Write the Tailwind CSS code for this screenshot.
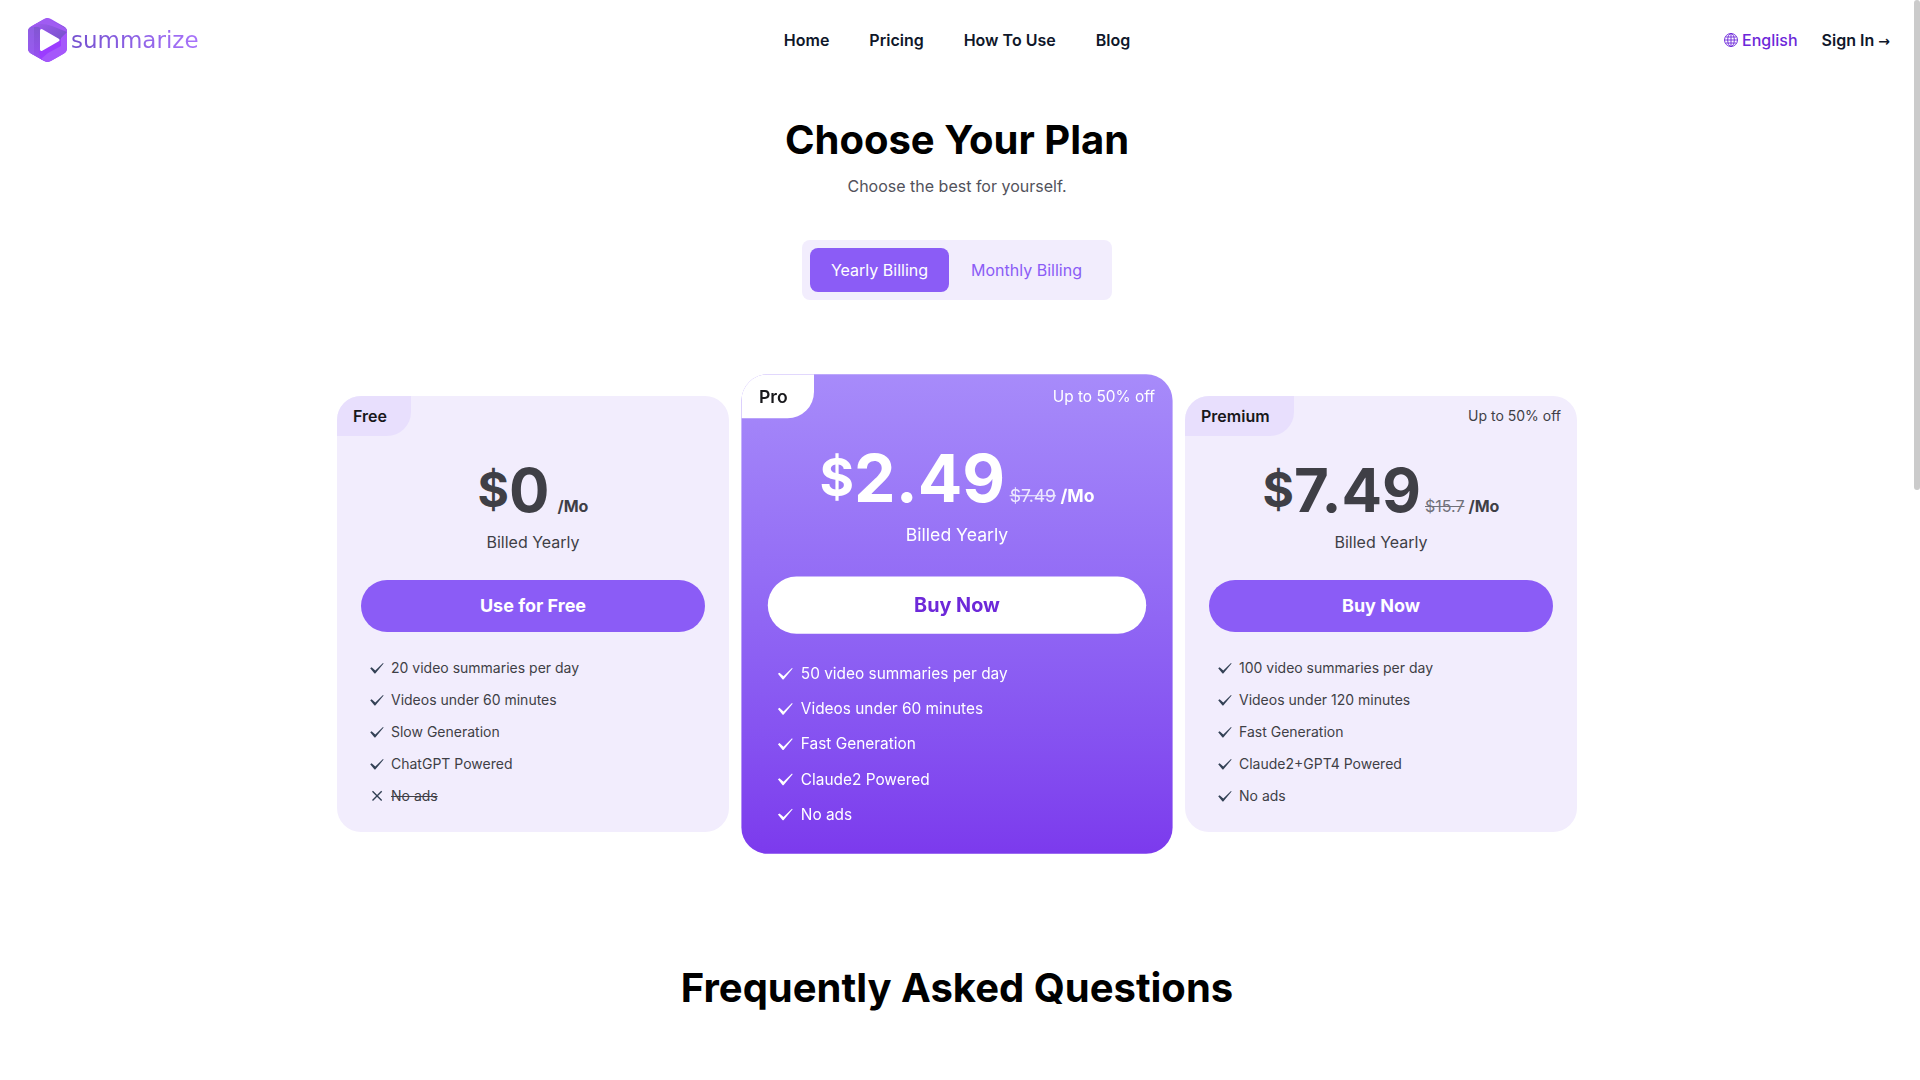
<!DOCTYPE html>
<html lang="en">
<head>
<meta charset="utf-8">
<meta name="viewport" content="width=device-width, initial-scale=1">
<title>Summarize – Pricing</title>
<script src="https://cdn.jsdelivr.net/npm/@tailwindcss/browser@4"></script>
</head>
<body class="min-h-screen overflow-x-hidden bg-white pr-[6px] font-['Inter',sans-serif] text-base text-[#3f3f46]">

<!-- Shared icons -->
<svg class="hidden" aria-hidden="true">
  <symbol id="check" viewBox="0 0 16 16">
    <path fill="currentColor" d="M1.200 8.300 2.600 7.300 6.300 10.600 14 3 14.600 3.600 6.300 13.600 5.500 13.600Z"/>
  </symbol>
  <symbol id="cross" viewBox="0 0 16 16">
    <path fill="none" stroke="currentColor" stroke-width="1.4" d="M3.5 3.3 12.7 12.5M12.7 3.3 3.5 12.5"/>
  </symbol>
</svg>

<header class="grid h-20 grid-cols-[1fr_auto_1fr] items-center px-6">
  <a href="#" class="flex items-center gap-[3px] pl-1" aria-label="summarize">
    <svg class="h-11 w-10" viewBox="0 0 40 44" aria-hidden="true">
      <defs>
        <linearGradient id="lg1" x1="0" y1="0" x2="0" y2="1"><stop offset="0" stop-color="#8057cf"/><stop offset="1" stop-color="#9a4ff5"/></linearGradient>
        <linearGradient id="lg2" x1="0" y1="0" x2="1" y2="1"><stop offset="0" stop-color="#a95cf8"/><stop offset="1" stop-color="#7452c8"/></linearGradient>
        <linearGradient id="lg3" x1="0" y1="1" x2="1" y2="0"><stop offset="0" stop-color="#8f43f4"/><stop offset="1" stop-color="#a65cff"/></linearGradient>
        <clipPath id="hex"><path d="M16 1.100Q19.500-1 23 1.100L36 8.500Q39 10.300 39 14V30Q39 33.700 36 35.500L23 43Q19.500 45 16 43L3 35.500Q0 33.700 0 30V14Q0 10.300 3 8.500Z"/></clipPath>
      </defs>
      <g clip-path="url(#hex)">
        <rect width="40" height="44" fill="url(#lg3)"/>
        <path fill="url(#lg1)" d="M0 10 12 8V33L19 44 0 36Z"/>
        <path fill="#9a63ee" opacity=".6" d="M0 10 6 9V38L0 35Z"/>
        <path fill="url(#lg2)" d="M0 10 19 0 39 10V16L32 22 13 10Q7 7 0 10Z"/>
        <path fill="#a05cf2" d="M3 8 19 0 39 11V14L24 8Q12 4 3 8Z"/>
        <path fill="#9b3cff" d="M39 14V26L20 36 13 44 11 33 32 22Q38 19 39 14Z"/>
        <path fill="#a557fb" d="M39 14V36L20 44 13 41 20 35 33 28V20Z"/>
      </g>
      <path fill="#fff" stroke="#fff" stroke-width="3" stroke-linejoin="round" d="M13.500 12.500 30 22 13.500 31.500Z"/>
    </svg>
    <span class="bg-linear-to-r from-[#7450cf] to-[#a873fb] bg-clip-text font-['DejaVu_Sans',sans-serif] text-[23px] leading-7 text-transparent">summarize</span>
  </a>
  <nav class="flex gap-10 font-semibold text-[#0f172a]">
    <a href="#">Home</a>
    <a href="#">Pricing</a>
    <a href="#">How To Use</a>
    <a href="#">Blog</a>
  </nav>
  <div class="flex items-center justify-end gap-6">
    <button type="button" class="flex items-center gap-1 font-medium text-[#6d28d9]">
      <svg class="size-[14px]" viewBox="0 0 14 14" fill="none" stroke="currentColor" stroke-width=".9" aria-hidden="true">
        <circle cx="7" cy="7" r="6.500"/><ellipse cx="7" cy="7" rx="3.300" ry="6.500"/><path d="M7 .5v13M.5 7h13M1.500 4h11M1.500 10h11"/>
      </svg>
      English
    </button>
    <a href="#" class="font-semibold text-[#0f172a]">Sign In <span class="font-['Open_Sans','DejaVu_Sans',sans-serif] text-sm font-bold">→</span></a>
  </div>
</header>

<main class="flex flex-col items-center pt-9">
  <h1 class="text-[40px] leading-12 font-bold text-black">Choose Your Plan</h1>
  <p class="mt-[10px] text-[#52525b]">Choose the best for yourself.</p>

  <div class="mt-[42px] flex rounded-lg bg-[#f2edfd] p-2">
    <button type="button" class="h-11 w-[139px] rounded-lg bg-[#8b5cf6] text-white" aria-pressed="true">Yearly Billing</button>
    <button type="button" class="h-11 w-[155px] rounded-lg text-[#8b5cf6]" aria-pressed="false">Monthly Billing</button>
  </div>

  <section class="mt-24 grid w-full max-w-[1240px] grid-cols-3 gap-8" aria-label="Plans">

    <article class="overflow-hidden rounded-3xl bg-[#f2edfd]">
      <div class="flex h-10 items-center justify-between">
        <h2 class="flex h-10 items-center rounded-br-3xl bg-[#e8dffd] pr-6 pl-4 font-semibold text-[#18181b]">Free</h2>
      </div>
      <div class="flex flex-col px-6 pt-6 pb-6">
        <div class="flex items-end justify-center gap-1 font-bold">
          <div class="flex items-center"><span class="text-5xl leading-12">$</span><span class="text-6xl leading-15">0</span></div>
          <span class="pb-0.5 pl-1">/Mo</span>
        </div>
        <p class="mt-[10px] text-center">Billed Yearly</p>
        <button type="button" class="mt-[26px] h-13 rounded-full bg-[#8b5cf6] text-lg font-bold text-white">Use for Free</button>
        <ul class="mt-6 flex flex-col gap-2 pl-2 text-sm leading-6">
          <li class="flex items-center gap-[6px]"><svg class="size-4 text-[#334155]"><use href="#check"/></svg>20 video summaries per day</li>
          <li class="flex items-center gap-[6px]"><svg class="size-4 text-[#334155]"><use href="#check"/></svg>Videos under 60 minutes</li>
          <li class="flex items-center gap-[6px]"><svg class="size-4 text-[#334155]"><use href="#check"/></svg>Slow Generation</li>
          <li class="flex items-center gap-[6px]"><svg class="size-4 text-[#334155]"><use href="#check"/></svg>ChatGPT Powered</li>
          <li class="flex items-center gap-[6px]"><svg class="size-4 text-[#334155]"><use href="#cross"/></svg><s>No ads</s></li>
        </ul>
      </div>
    </article>

    <article class="scale-110 overflow-hidden rounded-3xl bg-linear-to-b from-[#a78bfa] to-[#7c3aed] text-white">
      <div class="flex h-10 items-center justify-between">
        <h2 class="flex h-10 items-center rounded-br-3xl bg-white pr-6 pl-4 font-semibold text-[#18181b]">Pro</h2>
        <p class="pr-4 text-sm">Up to 50% off</p>
      </div>
      <div class="flex flex-col px-6 pt-6 pb-6">
        <div class="flex items-end justify-center gap-1 font-bold">
          <div class="flex items-center"><span class="text-5xl leading-12">$</span><span class="text-6xl leading-15">2.49</span></div>
          <s class="pb-0.5 font-normal text-[#ede9fe]">$7.49</s>
          <span class="pb-0.5">/Mo</span>
        </div>
        <p class="mt-[10px] text-center">Billed Yearly</p>
        <button type="button" class="mt-[26px] h-13 rounded-full bg-white text-lg font-bold text-[#6d28d9]">Buy Now</button>
        <ul class="mt-6 flex flex-col gap-2 pl-2 text-sm leading-6">
          <li class="flex items-center gap-[6px]"><svg class="size-4"><use href="#check"/></svg>50 video summaries per day</li>
          <li class="flex items-center gap-[6px]"><svg class="size-4"><use href="#check"/></svg>Videos under 60 minutes</li>
          <li class="flex items-center gap-[6px]"><svg class="size-4"><use href="#check"/></svg>Fast Generation</li>
          <li class="flex items-center gap-[6px]"><svg class="size-4"><use href="#check"/></svg>Claude2 Powered</li>
          <li class="flex items-center gap-[6px]"><svg class="size-4"><use href="#check"/></svg>No ads</li>
        </ul>
      </div>
    </article>

    <article class="overflow-hidden rounded-3xl bg-[#f2edfd]">
      <div class="flex h-10 items-center justify-between">
        <h2 class="flex h-10 items-center rounded-br-3xl bg-[#e8dffd] pr-6 pl-4 font-semibold text-[#18181b]">Premium</h2>
        <p class="pr-4 text-sm">Up to 50% off</p>
      </div>
      <div class="flex flex-col px-6 pt-6 pb-6">
        <div class="flex items-end justify-center gap-1 font-bold">
          <div class="flex items-center"><span class="text-5xl leading-12">$</span><span class="text-6xl leading-15">7.49</span></div>
          <s class="pb-0.5 font-normal text-[#71717a]">$15.7</s>
          <span class="pb-0.5">/Mo</span>
        </div>
        <p class="mt-[10px] text-center">Billed Yearly</p>
        <button type="button" class="mt-[26px] h-13 rounded-full bg-[#8b5cf6] text-lg font-bold text-white">Buy Now</button>
        <ul class="mt-6 flex flex-col gap-2 pl-2 text-sm leading-6">
          <li class="flex items-center gap-[6px]"><svg class="size-4 text-[#334155]"><use href="#check"/></svg>100 video summaries per day</li>
          <li class="flex items-center gap-[6px]"><svg class="size-4 text-[#334155]"><use href="#check"/></svg>Videos under 120 minutes</li>
          <li class="flex items-center gap-[6px]"><svg class="size-4 text-[#334155]"><use href="#check"/></svg>Fast Generation</li>
          <li class="flex items-center gap-[6px]"><svg class="size-4 text-[#334155]"><use href="#check"/></svg>Claude2+GPT4 Powered</li>
          <li class="flex items-center gap-[6px]"><svg class="size-4 text-[#334155]"><use href="#check"/></svg>No ads</li>
        </ul>
      </div>
    </article>
  </section>

  <h2 class="mt-33 text-[40px] leading-12 font-bold text-black">Frequently Asked Questions</h2>
</main>

<!-- Slim scroll indicator -->
<div class="fixed top-0 right-0 h-[490px] w-[6px] rounded-full bg-[#cbcbcb]" aria-hidden="true"></div>
</body>
</html>
